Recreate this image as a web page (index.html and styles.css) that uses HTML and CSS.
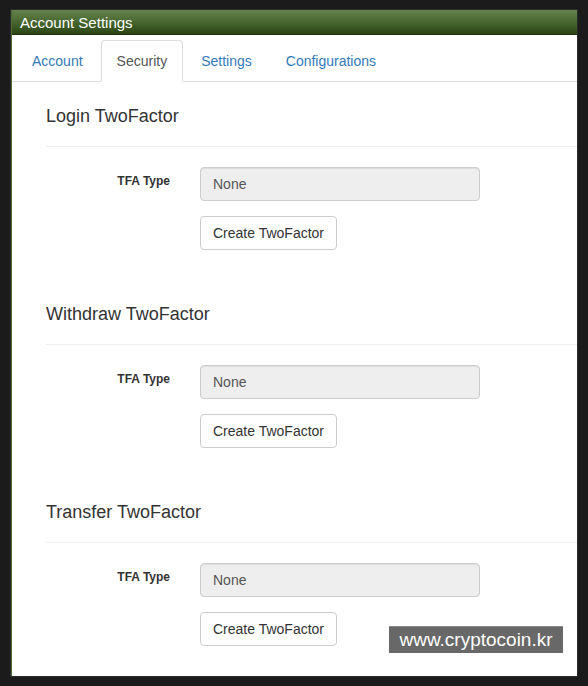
FILE: index.html
```html
<!DOCTYPE html>
<html>
<head>
<meta charset="utf-8">
<link rel="stylesheet" href="styles.css">
</head>
<body>
<div class="panel">
  <div class="panel-heading">Account Settings</div>
  <ul class="nav-tabs">
    <li><a>Account</a></li>
    <li class="active"><a>Security</a></li>
    <li><a>Settings</a></li>
    <li><a>Configurations</a></li>
  </ul>
  <div class="section">
    <h3>Login TwoFactor</h3>
    <hr>
    <div class="row">
      <label class="control-label">TFA Type</label>
      <div class="controls">
        <input class="form-control" type="text" value="None" disabled>
        <button class="btn">Create TwoFactor</button>
      </div>
    </div>
  </div>
  <div class="section">
    <h3>Withdraw TwoFactor</h3>
    <hr>
    <div class="row">
      <label class="control-label">TFA Type</label>
      <div class="controls">
        <input class="form-control" type="text" value="None" disabled>
        <button class="btn">Create TwoFactor</button>
      </div>
    </div>
  </div>
  <div class="section">
    <h3>Transfer TwoFactor</h3>
    <hr>
    <div class="row">
      <label class="control-label">TFA Type</label>
      <div class="controls">
        <input class="form-control" type="text" value="None" disabled>
        <button class="btn">Create TwoFactor</button>
      </div>
    </div>
  </div>
</div>
<div class="watermark">www.cryptocoin.kr</div>
</body>
</html>
```
FILE: styles.css
```css
html, body {
  margin: 0;
  padding: 0;
}
body {
  background: #1b1b1b;
  padding: 10px 0 0 11px;
  font-family: "Liberation Sans", Arial, sans-serif;
  font-size: 14px;
  color: #333;
  height: 686px;
  box-sizing: border-box;
  overflow: hidden;
}
.panel {
  width: 566px;
  height: 666px;
  box-sizing: border-box;
  background: #fff;
  border-left: 1px solid #4c6b33;
  box-shadow: 0 0 0 1px #2c2c2c;
  overflow: hidden;
}
.panel-heading {
  height: 25px;
  box-sizing: border-box;
  padding-left: 8px;
  line-height: 25px;
  font-size: 15px;
  color: #fff;
  background: linear-gradient(#66834e, #42602a 60%, #2b4514);
  border-bottom: 1px solid #1e300b;
}
.nav-tabs {
  list-style: none;
  margin: 0;
  padding: 5px 0 0 4px;
  display: flex;
  border-bottom: 1px solid #ddd;
}
.nav-tabs li {
  margin-bottom: -1px;
  margin-right: 2px;
}
.nav-tabs a {
  display: block;
  padding: 10px 15px;
  line-height: 20px;
  border: 1px solid transparent;
  border-radius: 4px 4px 0 0;
  color: #337ab7;
}
.nav-tabs .active a {
  color: #555;
  background: #fff;
  border-color: #ddd #ddd transparent;
}
.section {
  margin-left: 34px;
  padding-top: 24px;
  margin-bottom: 30px;
}
.section h3 {
  margin: 0;
  font-size: 18px;
  font-weight: normal;
  line-height: 20px;
  color: #333;
}
.section hr {
  margin: 20px 0 20px;
  border: 0;
  border-top: 1px solid #eee;
  height: 0;
}
.row {
  display: flex;
}
.control-label {
  width: 139px;
  box-sizing: border-box;
  padding: 6px 15px 0 0;
  text-align: right;
  font-size: 12px;
  font-weight: bold;
  line-height: 17px;
  color: #333;
}
.controls {
  padding-left: 15px;
  display: flex;
  flex-direction: column;
  align-items: flex-start;
}
.form-control {
  width: 280px;
  height: 34px;
  box-sizing: border-box;
  padding: 6px 12px;
  margin: 0 0 15px;
  font-family: "Liberation Sans", Arial, sans-serif;
  font-size: 14px;
  line-height: 20px;
  color: #555;
  background: #eee;
  border: 1px solid #ccc;
  border-radius: 4px;
  box-shadow: inset 0 1px 1px rgba(0,0,0,0.075);
  opacity: 1;
  -webkit-text-fill-color: #555;
}
.btn {
  height: 34px;
  box-sizing: border-box;
  padding: 6px 12px;
  margin: 0;
  font-family: "Liberation Sans", Arial, sans-serif;
  font-size: 14px;
  line-height: 20px;
  color: #333;
  background: #fff;
  border: 1px solid #ccc;
  border-radius: 4px;
}
.watermark {
  position: absolute;
  left: 389px;
  top: 626px;
  width: 174px;
  height: 27px;
  box-sizing: border-box;
  background: #686868;
  border-top: 1px solid #8a8a8a;
  color: #fff;
  font-size: 19px;
  line-height: 25px;
  text-align: center;
}
```
